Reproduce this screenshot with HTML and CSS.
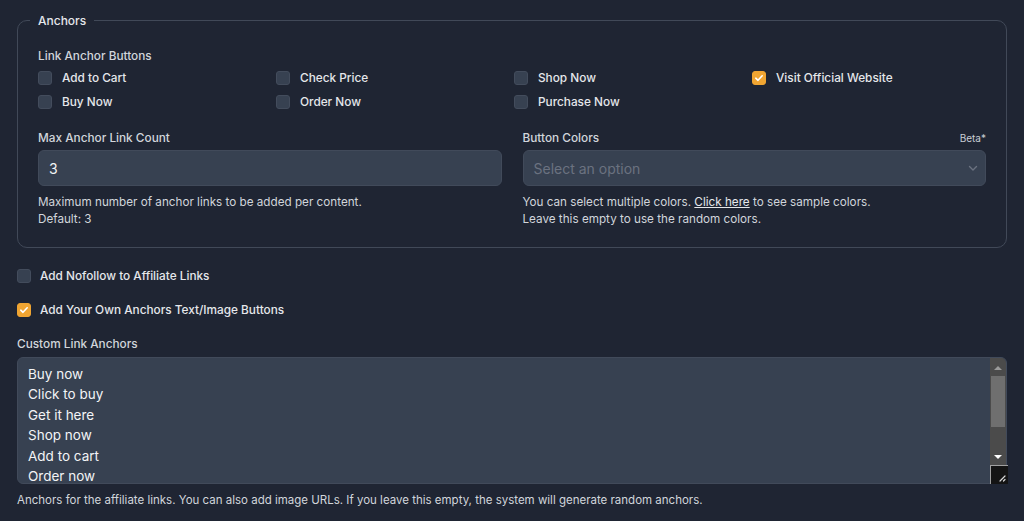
FILE: index.html
```html
<!DOCTYPE html>
<html>
<head>
<meta charset="utf-8">
<link rel="stylesheet" href="styles.css">
</head>
<body>
<div class="page">
  <fieldset class="group">
    <legend class="legend">Anchors</legend>
    <div class="field-label">Link Anchor Buttons</div>
    <div class="check-grid">
      <label class="check"><span class="box"></span>Add to Cart</label>
      <label class="check"><span class="box"></span>Check Price</label>
      <label class="check"><span class="box"></span>Shop Now</label>
      <label class="check"><span class="box checked"><svg viewBox="0 0 14 14" width="14" height="14"><path d="M3.8 7.2 L6 9.3 L10.2 4.8" fill="none" stroke="#fff" stroke-width="1.6" stroke-linecap="round" stroke-linejoin="round"/></svg></span>Visit Official Website</label>
      <label class="check"><span class="box"></span>Buy Now</label>
      <label class="check"><span class="box"></span>Order Now</label>
      <label class="check"><span class="box"></span>Purchase Now</label>
      <span></span>
    </div>
    <div class="two-col">
      <div class="col">
        <div class="label-row"><span class="field-label">Max Anchor Link Count</span></div>
        <div class="input">3</div>
        <p class="help">Maximum number of anchor links to be added per content.<br>Default: 3</p>
      </div>
      <div class="col">
        <div class="label-row"><span class="field-label">Button Colors</span><span class="beta">Beta*</span></div>
        <div class="input select"><span class="placeholder">Select an option</span>
          <svg class="chev" viewBox="0 0 12 12" width="12" height="12"><path d="M2.5 4.5 L6 8 L9.5 4.5" fill="none" stroke="#6b7280" stroke-width="1.4" stroke-linecap="round" stroke-linejoin="round"/></svg>
        </div>
        <p class="help">You can select multiple colors. <a class="link">Click here</a> to see sample colors.<br>Leave this empty to use the random colors.</p>
      </div>
    </div>
  </fieldset>

  <label class="check solo first"><span class="box"></span>Add Nofollow to Affiliate Links</label>
  <label class="check solo second"><span class="box checked"><svg viewBox="0 0 14 14" width="14" height="14"><path d="M3.8 7.2 L6 9.3 L10.2 4.8" fill="none" stroke="#fff" stroke-width="1.6" stroke-linecap="round" stroke-linejoin="round"/></svg></span>Add Your Own Anchors Text/Image Buttons</label>

  <div class="field-label custom-label">Custom Link Anchors</div>
  <div class="area-wrap">
    <textarea class="area">Buy now
Click to buy
Get it here
Shop now
Add to cart
Order now
Buy it now
Get yours today
Purchase here
Check it out
Learn more
See details</textarea>
    <div class="sbar">
      <div class="sbtn up"><svg viewBox="0 0 8 5" width="8" height="5"><path d="M0 5 L4 1 L8 5 Z" fill="#9a9a9a"/></svg></div>
      <div class="strack"><div class="sthumb"></div></div>
      <div class="sbtn down"><svg viewBox="0 0 8 5" width="8" height="5"><path d="M0 0 L8 0 L4 4 Z" fill="#ffffff"/></svg></div>
      <div class="sresize"><svg viewBox="0 0 18 19" width="18" height="19"><path d="M15 11 L10 16 M15 14.5 L13.5 16" stroke="#d8d8d8" stroke-width="1.2" stroke-linecap="round"/></svg></div>
    </div>
  </div>
  <p class="help bottom">Anchors for the affiliate links. You can also add image URLs. If you leave this empty, the system will generate random anchors.</p>
</div>
</body>
</html>
```

FILE: styles.css
```css
* { box-sizing: border-box; }
html, body {
  margin: 0;
  background: #1f2533;
  font-family: "Inter", "Noto Sans", sans-serif;
  color: #e5e7eb;
}
.page {
  padding: 13px 17px 0 17px;
  display: flex;
  flex-direction: column;
}
.group {
  margin: 0;
  min-width: 0;
  border: 1px solid #414958;
  border-radius: 10px;
  padding: 21px 20px 19px 20px;
}
.legend {
  margin-left: -8px;
  padding: 0 8px;
  font-size: 12px;
  font-weight: 500;
  color: #e5e7eb;
}
.field-label {
  font-size: 11.8px;
  font-weight: 500;
  color: #d1d5db;
}
.check-grid {
  display: grid;
  grid-template-columns: 238px 238px 238px 1fr;
  row-gap: 8px;
  margin-top: 7px;
}
.check {
  display: flex;
  align-items: center;
  gap: 10px;
  font-size: 11.8px;
  font-weight: 500;
  color: #e5e7eb;
  height: 16px;
}
.box {
  width: 14px;
  height: 14px;
  border-radius: 3px;
  background: #374151;
  border: 1px solid #434c5c;
  display: inline-flex;
  flex: none;
}
.box.checked {
  background: #f0a532;
  border-color: #f0a532;
}
.box.checked svg { margin: -1px; }
.two-col {
  display: grid;
  grid-template-columns: 1fr 1fr;
  column-gap: 21px;
  margin-top: 20px;
}
.label-row {
  display: flex;
  justify-content: space-between;
  align-items: center;
  height: 16px;
}
.beta {
  font-size: 10px;
  color: #c9cdd4;
}
.input {
  margin-top: 4px;
  height: 36px;
  border-radius: 6px;
  background: #374151;
  border: 1px solid #414a5a;
  display: flex;
  align-items: center;
  padding: 0 10px;
  font-size: 14px;
  color: #f3f4f6;
}
.select { justify-content: space-between; padding-right: 6px; }
.placeholder { color: #6b7280; font-size: 14px; }
.help {
  margin: 8px 0 0 0;
  font-size: 11.7px;
  line-height: 17px;
  color: #d1d5db;
}
.link { color: #e5e7eb; text-decoration: underline; }
.solo { gap: 9px; }
.solo.first { margin-top: 20px; }
.solo.second { margin-top: 18px; }
.custom-label { margin-top: 19px; }
.area-wrap {
  position: relative;
  margin-top: 6px;
  height: 127px;
}
.area {
  display: block;
  height: 127px;
  width: 100%;
  resize: none;
  overflow: hidden;
  background: #374151;
  border: 1px solid #414a5a;
  border-radius: 6px;
  color: #f3f4f6;
  font-family: "Inter", "Noto Sans", sans-serif;
  font-size: 13.5px;
  line-height: 20.4px;
  padding: 6px 10px;
  outline: none;
}
.sbar {
  position: absolute;
  top: 1px;
  right: 1px;
  bottom: 0;
  width: 16px;
  display: flex;
  flex-direction: column;
  background: #4b4b4b;
  border-top-right-radius: 5px;
}
.sbtn {
  display: flex;
  align-items: center;
  justify-content: center;
  flex: none;
}
.sbtn.up { height: 17px; padding-top: 1px; }
.sbtn.down { height: 17px; padding-top: 1px; }
.strack {
  flex: 1;
  padding: 1px 1px 0 1px;
}
.sthumb {
  height: 51px;
  background: #6f6f6f;
}
.sresize {
  flex: none;
  height: 19px;
  width: 18px;
  margin-right: -1px;
  background: #141414;
  border-top: 1px solid #a0a0a0;
  border-left: 1px solid #a0a0a0;
  display: flex;
}
.sresize svg { margin: -1px 0 0 -1px; }
.bottom {
  margin-top: 8px;
  font-size: 11.5px;
}
```
